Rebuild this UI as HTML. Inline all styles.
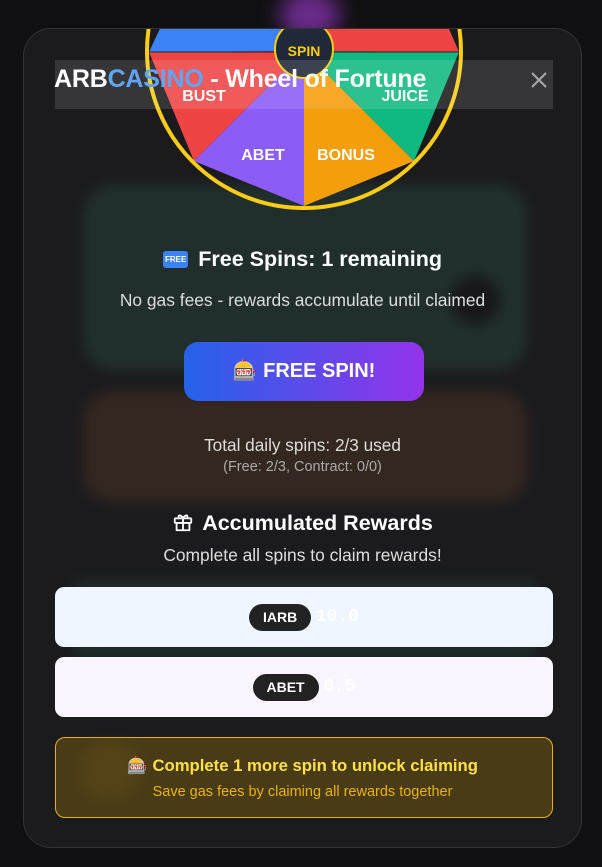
<!DOCTYPE html>
<html><head><meta charset="utf-8"><style>
*{margin:0;padding:0;box-sizing:border-box}
body{width:602px;height:867px;background:#101012;font-family:"Liberation Sans","DejaVu Sans",sans-serif;position:relative;overflow:hidden}
.bl{position:absolute;filter:blur(6px)}
.modal{position:absolute;left:23px;top:28px;width:559px;height:820px;border-radius:28px;background:rgba(30,30,32,0.8);border:1px solid #333;overflow:hidden}
.c{position:absolute;left:0;width:100%;text-align:center}
</style></head><body>
<div class="bl" style="left:280px;top:-10px;width:60px;height:50px;border-radius:50%;background:#6a2b8a;filter:blur(10px)"></div>
<div class="bl" style="left:83px;top:185px;width:444px;height:185px;border-radius:30px;background:#2a7464"></div>
<div class="bl" style="left:450px;top:275px;width:50px;height:50px;border-radius:50%;background:#000"></div>
<div class="bl" style="left:83px;top:392px;width:444px;height:110px;border-radius:28px;background:#8a4a22"></div>
<div class="bl" style="left:75px;top:580px;width:460px;height:80px;background:#225e4e"></div>
<div class="bl" style="left:80px;top:740px;width:60px;height:60px;border-radius:50%;background:#7a5a10"></div>
<div class="modal">
<svg style="position:absolute;left:-23px;top:-28px" width="602" height="260">
<polygon points="303,50 148,51 200,-60 303,-90" fill="#3b82f6"/>
<polygon points="303,50 303,-90 410,-60 458,51" fill="#ef4444"/>
<polygon points="303,50 148,51 193,160" fill="#ef4444"/>
<polygon points="303,50 193,160 303,205" fill="#8b5cf6"/>
<polygon points="303,50 303,205 413,160" fill="#f59e0b"/>
<polygon points="303,50 413,160 458,51" fill="#10b981"/>
<line x1="148" y1="51" x2="458" y2="51" stroke="#222" stroke-width="1"/>
<circle cx="303" cy="50" r="157" fill="none" stroke="#facc15" stroke-width="4"/>
<circle cx="303" cy="48" r="29" fill="#1f2937" stroke="#facc15" stroke-width="2"/>
<text x="303" y="55" text-anchor="middle" font-family="Liberation Sans" font-weight="bold" font-size="14" fill="#facc15">SPIN</text>
<g font-family="Liberation Sans" font-weight="bold" font-size="16" fill="#fff" text-anchor="middle">
<text x="203" y="100">BUST</text><text x="404" y="100">JUICE</text>
<text x="262" y="159">ABET</text><text x="345" y="159">BONUS</text></g>
</svg>
<div style="position:absolute;left:31px;top:31px;width:498px;height:49px;background:rgba(255,255,255,0.12)"></div>
<div style="position:absolute;left:30px;top:36px;font-size:25px;font-weight:bold;color:#fff;letter-spacing:-0.2px">ARB<span style="color:#60a5fa">CASINO</span> - Wheel of Fortune</div>
<svg style="position:absolute;left:507px;top:43px" width="16" height="16"><path d="M1 1L15 15M15 1L1 15" stroke="#aaa" stroke-width="2"/></svg>
<div class="c" style="top:218px;font-size:21.5px;font-weight:bold;color:#fff"><span style="display:inline-block;background:#3b82f6;color:#fff;font-size:8px;padding:4px 2px;border-radius:3px;vertical-align:4px;margin-right:10px">FREE</span>Free Spins: 1 remaining</div>
<div class="c" style="top:261px;font-size:17.4px;color:#ddd">No gas fees - rewards accumulate until claimed</div>
<div style="position:absolute;left:160px;top:313px;width:240px;height:59px;border-radius:14px;background:linear-gradient(90deg,#2563eb,#9333ea);color:#fff;font-weight:bold;font-size:20px;text-align:center;line-height:59px">🎰 FREE SPIN!</div>
<div class="c" style="top:406px;font-size:17.2px;color:#ddd">Total daily spins: 2/3 used</div>
<div class="c" style="top:430px;font-size:14.5px;color:#aaa">(Free: 2/3, Contract: 0/0)</div>
<div class="c" style="top:482px;font-size:21.5px;font-weight:bold;color:#fff"><svg width="22" height="22" viewBox="0 0 24 24" style="vertical-align:-3px;margin-right:8px" fill="none" stroke="#fff" stroke-width="2" stroke-linejoin="round"><rect x="3" y="8" width="18" height="5" rx="1"/><path d="M5 13v8h14v-8M12 8v13M12 8C10 4 6 4 7.5 7M12 8c2-4 6-4 4.5-1"/></svg>Accumulated Rewards</div>
<div class="c" style="top:516px;font-size:17.4px;color:#ddd">Complete all spins to claim rewards!</div>
<div style="position:absolute;left:31px;top:558px;width:498px;height:60px;border-radius:9px;background:#eff6ff;text-align:center;line-height:60px"><span style="display:inline-block;background:#222;color:#fff;font-weight:bold;font-size:14px;border-radius:14px;padding:0 14px;line-height:27px;vertical-align:middle">IARB</span> <span style="font-family:'Liberation Mono',monospace;font-weight:bold;font-size:18px;color:#fff;vertical-align:middle">10.0</span></div>
<div style="position:absolute;left:31px;top:628px;width:498px;height:60px;border-radius:9px;background:#faf5ff;text-align:center;line-height:60px"><span style="display:inline-block;background:#222;color:#fff;font-weight:bold;font-size:14px;border-radius:14px;padding:0 14px;line-height:27px;vertical-align:middle">ABET</span> <span style="font-family:'Liberation Mono',monospace;font-weight:bold;font-size:18px;color:#fff;vertical-align:middle">0.5</span></div>
<div style="position:absolute;left:31px;top:708px;width:498px;height:81px;border-radius:10px;border:1px solid #eab308;background:rgba(120,92,16,0.5)"></div>
<div class="c" style="top:727px;font-size:16.7px;font-weight:bold;color:#fde047">🎰 Complete 1 more spin to unlock claiming</div>
<div class="c" style="top:755px;font-size:14.5px;color:#eab308">Save gas fees by claiming all rewards together</div>
</div>
</body></html>
